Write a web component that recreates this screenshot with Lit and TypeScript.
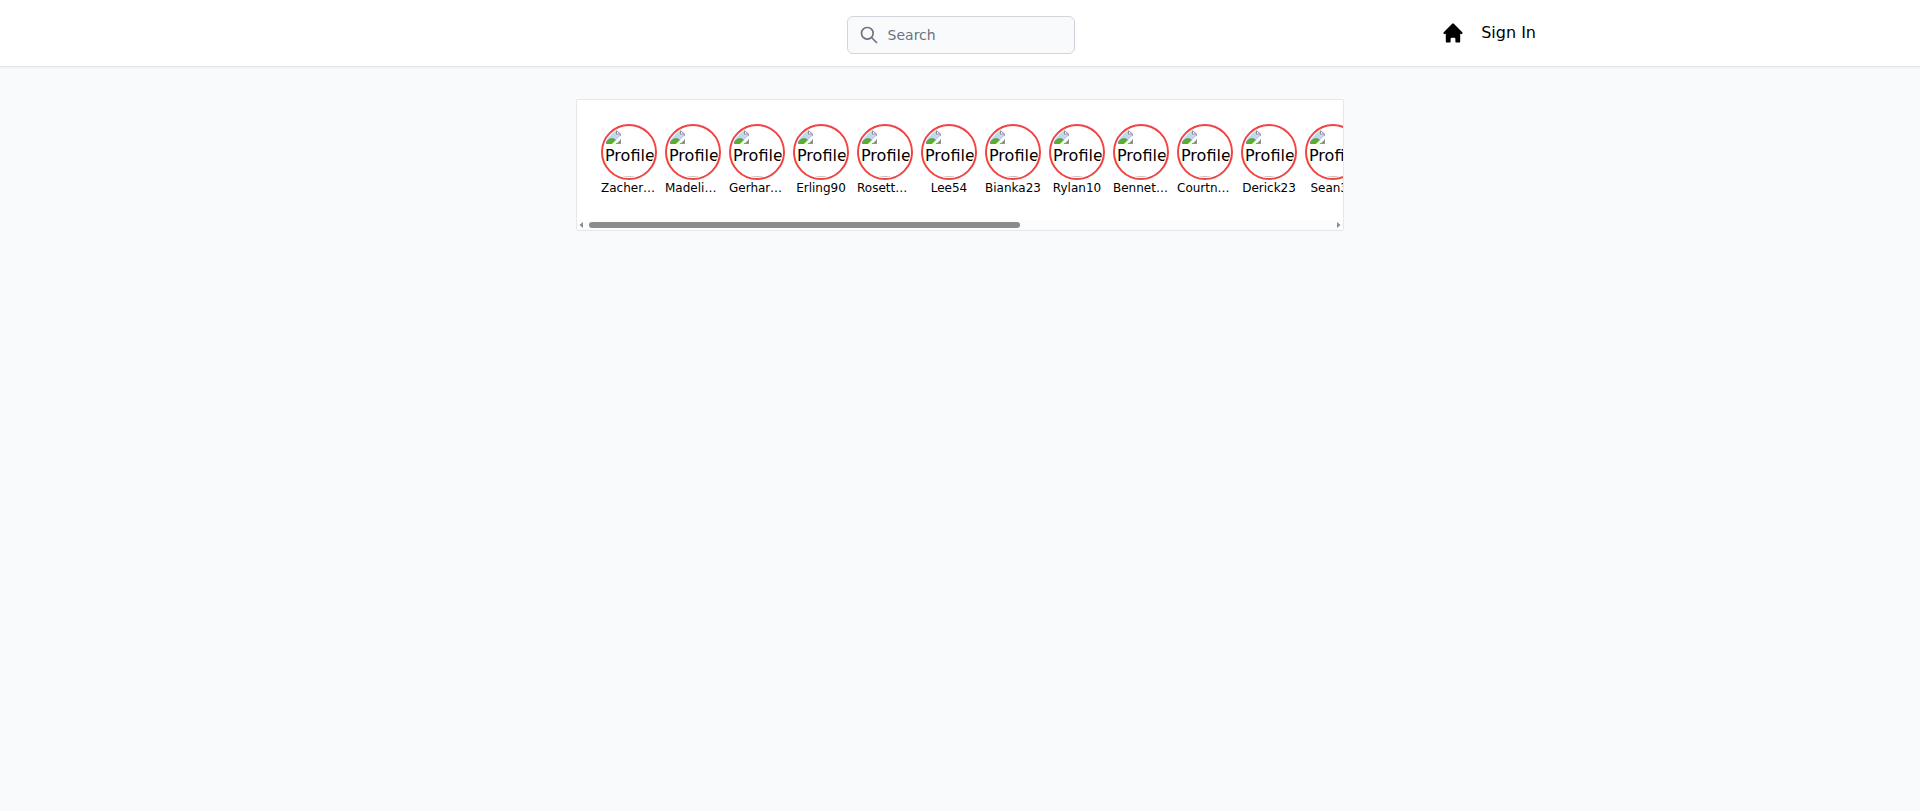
import { LitElement, html, css } from "lit";
import { customElement, state } from "lit/decorators.js";
import { styleMap } from "lit/directives/style-map.js";

const NAMES = [
  "Zachery_Ward", "Madeline.Kuhn", "Gerhard_Moen", "Erling90", "Rosetta_Lynch", "Lee54", "Bianka23",
  "Rylan10", "Bennett.Hills", "Courtney_Rau", "Derick23", "Sean34", "Maria12", "Oscar77",
  "Tessa41", "Nolan08", "Greta65", "Felix19", "Wanda82", "Hugo30",
];

@customElement("app-header")
export class AppHeader extends LitElement {
  static styles = css`
    :host {
      display: block;
      position: sticky;
      top: 0;
      z-index: 10;
      background: #fff;
      border-bottom: 1px solid #e5e7eb;
      box-shadow: 0 1px 2px rgba(0, 0, 0, 0.05);
    }
    .bar {
      display: flex;
      align-items: center;
      justify-content: space-between;
      max-width: 1152px;
      margin: 0 auto;
    }
    .brand { width: 96px; }
    .search {
      display: grid;
      align-items: center;
      margin-top: 4px;
      padding: 12px;
    }
    .search > * { grid-area: 1 / 1; }
    .search svg {
      width: 20px;
      height: 20px;
      margin-left: 12px;
      color: #6b7280;
      pointer-events: none;
      z-index: 1;
    }
    input {
      box-sizing: border-box;
      width: 228px;
      height: 38px;
      margin: 0;
      padding: 8px 12px 8px 40px;
      font: 14px/20px "DejaVu Sans", sans-serif;
      color: #000;
      background: #f9fafb;
      border: 1px solid #d1d5db;
      border-radius: 6px;
    }
    input::placeholder { color: #6b7280; opacity: 1; }
    nav {
      display: flex;
      align-items: center;
      gap: 16px;
    }
    nav a { display: block; color: #000; }
    nav svg { display: block; width: 24px; height: 24px; }
    button {
      padding: 0;
      border: 0;
      background: none;
      color: #000;
      font: 16px/24px "DejaVu Sans", sans-serif;
      cursor: pointer;
    }
  `;

  render() {
    return html`
      <div class="bar">
        <div class="brand"></div>
        <label class="search">
          <svg viewBox="0 0 24 24" fill="none" stroke="currentColor" stroke-width="2" stroke-linecap="round" stroke-linejoin="round" aria-hidden="true">
            <path d="M21 21l-6-6m2-5a7 7 0 11-14 0 7 7 0 0114 0z" />
          </svg>
          <input type="text" placeholder="Search" aria-label="Search" />
        </label>
        <nav>
          <a href="#" aria-label="Home">
            <svg viewBox="0 0 20 20" fill="currentColor" aria-hidden="true">
              <path d="M10.707 2.293a1 1 0 00-1.414 0l-7 7a1 1 0 001.414 1.414L4 10.414V17a1 1 0 001 1h2a1 1 0 001-1v-2a1 1 0 011-1h2a1 1 0 011 1v2a1 1 0 001 1h2a1 1 0 001-1v-6.586l.293.293a1 1 0 001.414-1.414l-7-7z" />
            </svg>
          </a>
          <button type="button">Sign In</button>
        </nav>
      </div>
    `;
  }
}

@customElement("app-stories")
export class AppStories extends LitElement {
  static styles = css`
    :host {
      display: block;
      background: #fff;
      border: 1px solid #e5e7eb;
      border-radius: 2px;
    }
    .strip {
      display: flex;
      gap: 8px;
      padding: 24px;
      overflow-x: auto;
      scrollbar-width: none;
    }
    .story { flex: none; width: 56px; }
    .ring {
      box-sizing: border-box;
      height: 56px;
      padding: 1px;
      border: 2px solid #ef4444;
      border-radius: 50%;
    }
    .photo {
      height: 50px;
      border-radius: 50%;
      overflow: hidden;
    }
    .missing {
      box-sizing: border-box;
      height: 50px;
      padding: 1px 0 0 1px;
      border-bottom: 1px solid #c0c0c0;
      line-height: 24px;
      white-space: nowrap;
    }
    .missing svg {
      display: block;
      width: 16px;
      height: 16px;
    }
    .missing span { display: block; }
    p {
      margin: 0;
      overflow: hidden;
      font-size: 12px;
      line-height: 16px;
      text-align: center;
      text-overflow: ellipsis;
      white-space: nowrap;
    }
    .scrollbar {
      display: flex;
      align-items: center;
      height: 10px;
      background: #fcfcfc;
      color: #8b8b8b;
    }
    .scrollbar button {
      display: flex;
      align-items: center;
      flex: none;
      width: 12px;
      height: 10px;
      padding: 0 2px;
      border: 0;
      background: none;
      color: inherit;
    }
    .scrollbar svg { display: block; flex: none; width: 4px; height: 8px; }
    .scrollbar .back { justify-content: flex-start; }
    .scrollbar .next { justify-content: flex-end; }
    .track { flex: 1; }
    .thumb {
      height: 6px;
      border-radius: 3px;
      background: currentColor;
    }
  `;

  @state() private shown = 58;
  @state() private offset = 0;

  private get strip() {
    return this.renderRoot.querySelector(".strip") as HTMLElement;
  }

  firstUpdated() {
    this.measure();
  }

  private measure() {
    const { clientWidth, scrollWidth, scrollLeft } = this.strip;
    this.shown = (clientWidth / scrollWidth) * 100;
    this.offset = (scrollLeft / scrollWidth) * 100;
  }

  private move(by: number) {
    this.strip.scrollBy({ left: by });
  }

  render() {
    return html`
      <div class="strip" @scroll=${this.measure}>
        ${NAMES.map((name) => html`
          <div class="story">
            <div class="ring">
              <div class="photo">
                <div class="missing">
                  <svg viewBox="0 0 16 16" aria-hidden="true">
                    <path d="M1 2h10l4 4v10H1z" fill="#c3d5f5" />
                    <path d="M1 16v-2c2-3 4-4 6-4 2 0 3 1 4 2l-4 4z" fill="#58ad36" />
                    <path d="M1.500 16V2.500h9.500l4.500 4V16" fill="none" stroke="#929292" />
                    <path d="M11.500 2.500v3.500h4z" fill="#fff" stroke="#929292" />
                    <path d="M7 16l9-8.500v3.500l-5 5z" fill="#fff" />
                    <path d="M11.500 16l4-4v4z" fill="#58ad36" />
                    <path d="M11 15.500h4.500V11.500" fill="none" stroke="#929292" />
                  </svg>
                  <span>Profile</span>
                </div>
              </div>
            </div>
            <p>${name}</p>
          </div>
        `)}
      </div>
      <div class="scrollbar">
        <button class="back" type="button" aria-label="Scroll left" @click=${() => this.move(-64)}>
          <svg viewBox="0 0 4 8" fill="currentColor"><path d="M4 1v6L0.500 4z" /></svg>
        </button>
        <div class="track">
          <div class="thumb" style=${styleMap({ width: `${this.shown}%`, marginLeft: `${this.offset}%` })}></div>
        </div>
        <button class="next" type="button" aria-label="Scroll right" @click=${() => this.move(64)}>
          <svg viewBox="0 0 4 8" fill="currentColor"><path d="M0 1v6l3.500-3z" /></svg>
        </button>
      </div>
    `;
  }
}

@customElement("app-root")
export class AppRoot extends LitElement {
  static styles = css`
    :host {
      display: block;
      min-height: 100vh;
      background: #f9fafb;
      color: #000;
      font: 16px/24px "DejaVu Sans", sans-serif;
    }
    main {
      max-width: 768px;
      margin: 0 auto;
      padding-top: 32px;
    }
  `;

  render() {
    return html`
      <app-header></app-header>
      <main><app-stories></app-stories></main>
    `;
  }
}
